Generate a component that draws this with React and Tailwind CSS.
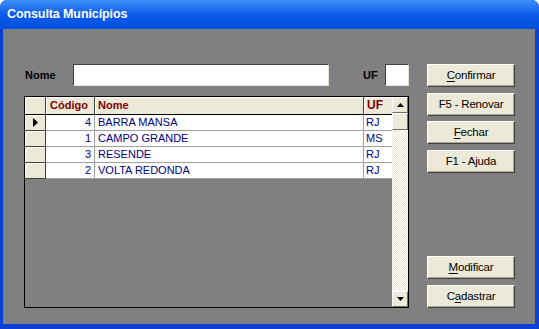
import React from 'react';

const rows = [
  { codigo: 4, nome: 'BARRA MANSA', uf: 'RJ' },
  { codigo: 1, nome: 'CAMPO GRANDE', uf: 'MS' },
  { codigo: 3, nome: 'RESENDE', uf: 'RJ' },
  { codigo: 2, nome: 'VOLTA REDONDA', uf: 'RJ' },
];

const buttons = [
  { label: <><u className="underline-offset-2">C</u>onfirmar</>, mt: 'mt-0' },
  { label: 'F5 - Renovar', mt: 'mt-[6px]' },
  { label: <><u className="underline-offset-2">F</u>echar</>, mt: 'mt-[5px]' },
  { label: 'F1 - Ajuda', mt: 'mt-[6px]' },
  { label: <><u className="underline-offset-2">M</u>odificar</>, mt: 'mt-[83px]' },
  { label: <>C<u className="underline-offset-2">a</u>dastrar</>, mt: 'mt-[6px]' },
];

const ScrollButton = ({ down }) => (
  <div className="h-[16px] flex items-center justify-center bg-[#ece9d8] border border-t-white border-l-white border-r-[#716f64] border-b-[#716f64]">
    <svg width="7" height="4" viewBox="0 0 7 4">
      {down ? <polygon points="0,0 7,0 3.5,4" fill="#000" /> : <polygon points="0,4 7,4 3.5,0" fill="#000" />}
    </svg>
  </div>
);

const App = () => {
  return (
    <div className="w-[539px] h-[329px] flex flex-col bg-[#0b3fd6] rounded-t-[7px] overflow-hidden font-['Liberation_Sans',Arial,sans-serif]">
      {/* title bar */}
      <div className="h-[29px] shrink-0 flex items-center px-[7px] bg-gradient-to-b from-[#3d8ff9] via-[#0a5be9] to-[#0450e0] text-white font-bold text-[12.5px] tracking-[-0.1px]">
        Consulta Municípios
      </div>

      <div className="flex-1 flex ml-[3px] mr-[4px] mb-[5px] bg-[#808080] pt-[35px] pl-[21px]">
        {/* left side */}
        <div className="w-[385px] flex flex-col">
          <div className="h-[22px] flex items-center text-[11px] font-bold text-black">
            <span className="w-[49px] pl-[1px]">Nome</span>
            <div className="w-[256px] h-[22px] bg-white border border-t-[#404040] border-l-[#404040] border-b-[#e6e3d6] border-r-[#e6e3d6]" />
            <span className="ml-[34px] w-[22px]">UF</span>
            <div className="w-[24px] h-[22px] bg-white border border-t-[#404040] border-l-[#404040] border-b-[#e6e3d6] border-r-[#e6e3d6]" />
          </div>

          {/* grid */}
          <div className="mt-[10px] w-[385px] h-[212px] border border-black flex bg-[#808080]">
            <div className="w-[367px] flex flex-col text-[11px] leading-[15px]">
              <div className="h-[18px] flex bg-[#ece9d8] border-b border-black font-bold text-[#800000]">
                <div className="w-[21px] border-r border-[#404040] shadow-[inset_1px_1px_0_#fff]" />
                <div className="w-[49px] border-r border-[#404040] pl-[4px] flex items-center shadow-[inset_1px_1px_0_#fff]">Código</div>
                <div className="w-[269px] border-r border-[#404040] pl-[3px] flex items-center shadow-[inset_1px_1px_0_#fff]">Nome</div>
                <div className="w-[28px] pl-[3px] flex items-center text-[12px] shadow-[inset_1px_1px_0_#fff]">UF</div>
              </div>
              {rows.map((r, i) => (
                <div key={r.codigo} className="h-[16px] flex text-[#000080]">
                  <div className="w-[21px] bg-[#ece9d8] border-r border-b border-[#404040] flex items-center justify-center shadow-[inset_1px_1px_0_#fff]">
                    {i === 0 && (
                      <svg width="5" height="9" viewBox="0 0 5 9">
                        <polygon points="0,0 5,4.5 0,9" fill="#000" />
                      </svg>
                    )}
                  </div>
                  <div className="w-[49px] bg-white border-r border-b border-[#a0a0a0] text-right pr-[3px]">{r.codigo}</div>
                  <div className="w-[269px] bg-white border-r border-b border-[#a0a0a0] pl-[3px]">{r.nome}</div>
                  <div className="w-[28px] bg-white border-b border-[#a0a0a0] pl-[2px]">{r.uf}</div>
                </div>
              ))}
            </div>

            {/* scrollbar */}
            <div className="w-[16px] flex flex-col">
              <ScrollButton />
              <div className="h-[17px] bg-[#ece9d8] border border-t-white border-l-white border-r-[#716f64] border-b-[#716f64]" />
              <div className="flex-1 bg-[image:repeating-conic-gradient(#ece9d8_0_25%,#ffffff_0_50%)] bg-[length:2px_2px]" />
              <ScrollButton down />
            </div>
          </div>
        </div>

        {/* right side buttons */}
        <div className="ml-[18px] flex flex-col">
          {buttons.map((b, i) => (
            <button
              key={i}
              className={`${b.mt} w-[88px] h-[23px] bg-[#ece9d8] text-black text-[11.5px] tracking-[-0.2px] border border-t-white border-l-white border-r-[#404040] border-b-[#404040] shadow-[inset_-1px_-1px_0_#aca899]`}
            >
              {b.label}
            </button>
          ))}
        </div>
      </div>
    </div>
  );
};

export default App;
